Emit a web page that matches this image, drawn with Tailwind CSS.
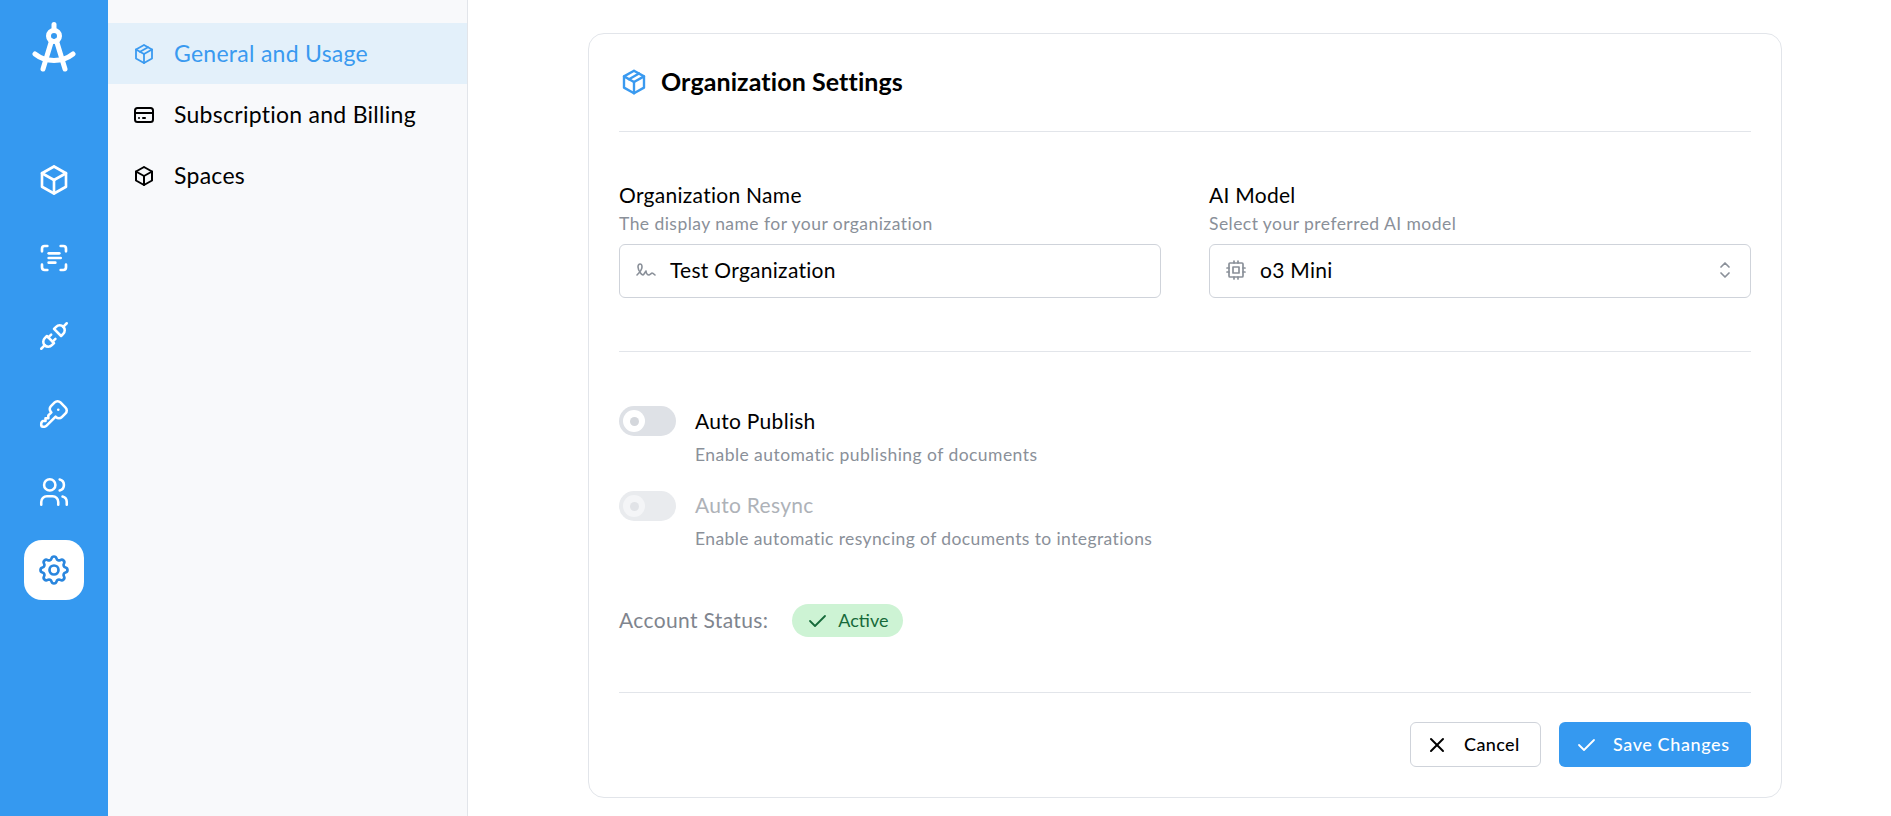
<!doctype html>
<html><head><meta charset="utf-8">
<script src="https://cdn.jsdelivr.net/npm/@tailwindcss/browser@4"></script>
</head>
<body class="m-0 bg-white font-['Lato','Noto_Sans',sans-serif] text-black">
<div class="flex h-[816px] w-[1891px] overflow-hidden">
  <aside class="flex w-[108px] shrink-0 flex-col items-center bg-[#3599f0] text-white">
    <svg class="mt-[21px] h-[52px] w-[44px]" viewBox="0 0 44 52" fill="none" stroke="currentColor" stroke-width="5" stroke-linecap="round" stroke-linejoin="round"><path d="M22 3.500v4"/><circle cx="22" cy="15" r="5.500"/><path d="M19.500 20 11 48"/><path d="M24.500 20 33 48"/><path d="M3 33c5 4 11 6.500 19 6.500S36 37 41 33"/></svg>
    <nav class="mt-[77px] flex flex-col gap-[18px]">
      <div class="flex size-[60px] items-center justify-center"><svg class="size-[36px]" viewBox="0 0 24 24" fill="none" stroke="currentColor" stroke-width="1.750" stroke-linecap="round" stroke-linejoin="round"><path d="M12 3l8 4.500l0 9l-8 4.500l-8 -4.500l0 -9l8 -4.500"/><path d="M12 12l8 -4.500"/><path d="M12 12l0 9"/><path d="M12 12l-8 -4.500"/></svg></div>
      <div class="flex size-[60px] items-center justify-center"><svg class="size-[32px]" viewBox="0 0 24 24" fill="none" stroke="currentColor" stroke-width="2" stroke-linecap="round" stroke-linejoin="round"><path d="M3 7V5a2 2 0 0 1 2-2h2"/><path d="M17 3h2a2 2 0 0 1 2 2v2"/><path d="M21 17v2a2 2 0 0 1-2 2h-2"/><path d="M7 21H5a2 2 0 0 1-2-2v-2"/><path d="M8 8.500h8"/><path d="M8 12h9"/><path d="M8 15.500h5"/></svg></div>
      <div class="flex size-[60px] items-center justify-center"><svg class="size-[34px]" viewBox="0 0 24 24" fill="none" stroke="currentColor" stroke-width="1.800" stroke-linecap="round" stroke-linejoin="round"><path d="M7 12l5 5l-1.500 1.500a3.536 3.536 0 1 1 -5 -5l1.500 -1.500z"/><path d="M17 12l-5 -5l1.500 -1.500a3.536 3.536 0 1 1 5 5l-1.500 1.500z"/><path d="M3 21l2.500 -2.500"/><path d="M18.500 5.500l2.500 -2.500"/><path d="M10 11l-2 2"/><path d="M13 14l-2 2"/></svg></div>
      <div class="flex size-[60px] items-center justify-center"><svg class="size-[34px]" viewBox="0 0 24 24" fill="none" stroke="currentColor" stroke-width="1.800" stroke-linecap="round" stroke-linejoin="round"><path d="M16.555 3.843l3.602 3.602a2.877 2.877 0 0 1 0 4.069l-2.643 2.643a2.877 2.877 0 0 1 -4.069 0l-.301 -.301l-6.558 6.558a2 2 0 0 1 -1.239 .578l-.175 .008h-1.172a1 1 0 0 1 -.993 -.883l-.007 -.117v-1.172a2 2 0 0 1 .467 -1.284l.119 -.13l.414 -.414h2v-2h2v-2l2.144 -2.144l-.301 -.301a2.877 2.877 0 0 1 0 -4.069l2.643 -2.643a2.877 2.877 0 0 1 4.069 0z"/><path d="M15 9h.01"/></svg></div>
      <div class="flex size-[60px] items-center justify-center"><svg class="size-[34px]" viewBox="0 0 24 24" fill="none" stroke="currentColor" stroke-width="1.800" stroke-linecap="round" stroke-linejoin="round"><path d="M9 7m-4 0a4 4 0 1 0 8 0a4 4 0 1 0 -8 0"/><path d="M3 21v-2a4 4 0 0 1 4 -4h4a4 4 0 0 1 4 4v2"/><path d="M16 3.130a4 4 0 0 1 0 7.750"/><path d="M21 21v-2a4 4 0 0 0 -3 -3.850"/></svg></div>
      <div class="flex size-[60px] items-center justify-center rounded-[18px] bg-white text-[#2a86de]"><svg class="size-[36px]" viewBox="0 0 24 24" fill="none" stroke="currentColor" stroke-width="1.800" stroke-linecap="round" stroke-linejoin="round"><path d="M10.325 4.317c.426 -1.756 2.924 -1.756 3.350 0a1.724 1.724 0 0 0 2.573 1.066c1.543 -.94 3.310 .826 2.370 2.370a1.724 1.724 0 0 0 1.065 2.572c1.756 .426 1.756 2.924 0 3.350a1.724 1.724 0 0 0 -1.066 2.573c.94 1.543 -.826 3.310 -2.370 2.370a1.724 1.724 0 0 0 -2.572 1.065c-.426 1.756 -2.924 1.756 -3.350 0a1.724 1.724 0 0 0 -2.573 -1.066c-1.543 .94 -3.310 -.826 -2.370 -2.370a1.724 1.724 0 0 0 -1.065 -2.572c-1.756 -.426 -1.756 -2.924 0 -3.350a1.724 1.724 0 0 0 1.066 -2.573c-.94 -1.543 .826 -3.310 2.370 -2.370c1 .608 2.296 .07 2.572 -1.065z"/><path d="M9 12a3 3 0 1 0 6 0a3 3 0 0 0 -6 0"/></svg></div>
    </nav>
  </aside>

  <div class="w-[360px] shrink-0 border-r border-[#e2e5ea] bg-[#f8f9fb] pt-[23px] text-[23px] tracking-[0.27px]">
    <div class="flex h-[61px] items-center gap-[18px] bg-[#e3f0fa] pl-[24px] text-[#3a9af0]">
      <svg class="size-[24px] shrink-0" viewBox="0 0 24 24" fill="none" stroke="currentColor" stroke-width="1.800" stroke-linecap="round" stroke-linejoin="round"><path d="M12 3l8 4.500v9l-8 4.500l-8-4.500v-9l8-4.500"/><path d="M12 12l8-4.500"/><path d="M12 12v9"/><path d="M12 12l-8-4.500"/><path d="M16 5.250l-8 4.500"/></svg>
      <span>General and Usage</span>
    </div>
    <div class="flex h-[61px] items-center gap-[18px] pl-[24px]">
      <svg class="size-[24px] shrink-0" viewBox="0 0 24 24" fill="none" stroke="currentColor" stroke-width="2" stroke-linecap="round" stroke-linejoin="round"><rect x="3" y="5" width="18" height="14" rx="2.500"/><path d="M3 10h18"/><path d="M7 15h.01"/><path d="M11 15h2"/></svg>
      <span>Subscription and Billing</span>
    </div>
    <div class="flex h-[61px] items-center gap-[18px] pl-[24px]">
      <svg class="size-[24px] shrink-0" viewBox="0 0 24 24" fill="none" stroke="currentColor" stroke-width="2" stroke-linecap="round" stroke-linejoin="round"><path d="M12 3l8 4.500l0 9l-8 4.500l-8 -4.500l0 -9l8 -4.500"/><path d="M12 12l8 -4.500"/><path d="M12 12l0 9"/><path d="M12 12l-8 -4.500"/></svg>
      <span>Spaces</span>
    </div>
  </div>

  <main class="min-w-0 flex-1 pl-[120px] pr-[109px] pt-[33px]">
    <section class="h-[765px] rounded-[16px] border border-[#e2e5ea] bg-white px-[30px]">
      <div class="flex h-[98px] items-center gap-[12px] border-b border-[#e2e5ea] pb-[2px]">
        <svg class="size-[30px] shrink-0 text-[#3a9af0]" viewBox="0 0 24 24" fill="none" stroke="currentColor" stroke-width="1.900" stroke-linecap="round" stroke-linejoin="round"><path d="M12 3l8 4.500v9l-8 4.500l-8-4.500v-9l8-4.500"/><path d="M12 12l8-4.500"/><path d="M12 12v9"/><path d="M12 12l-8-4.500"/><path d="M16 5.250l-8 4.500"/></svg>
        <h1 class="text-[25px] font-bold tracking-[0.1px]">Organization Settings</h1>
      </div>

      <div class="grid grid-cols-2 gap-x-[48px] border-b border-[#e2e5ea] pb-[53px] pt-[49px]">
        <div>
          <div class="h-[30px] text-[21px] leading-[28px] tracking-[0.28px]">Organization Name</div>
          <div class="mb-[7px] h-[26px] text-[17.500px] leading-[26px] tracking-[0.45px] text-[#8a9099]">The display name for your organization</div>
          <div class="flex h-[54px] items-center gap-[12px] rounded-[6px] border border-[#cfd3da] pb-[2px] pl-[14px] text-[21px] tracking-[0.28px]">
            <svg class="size-[24px] shrink-0 text-[#8a9099]" viewBox="0 0 24 24" fill="none" stroke="currentColor" stroke-width="1.600" stroke-linecap="round" stroke-linejoin="round"><path d="M3 17c3.333 -3.333 5 -6 5 -8c0 -3 -1 -3 -2 -3s-2.032 1.085 -2 3c.034 2.048 1.658 4.877 2.500 6c1.500 2 2.500 2.500 3.500 1l2 -3c.333 2.667 1.333 4 3 4c.53 0 2.639 -2 3 -2c.517 0 1.517 .667 3 2"/></svg>
            <span>Test Organization</span>
          </div>
        </div>
        <div>
          <div class="h-[30px] text-[21px] leading-[28px] tracking-[0.28px]">AI Model</div>
          <div class="mb-[7px] h-[26px] text-[17.500px] leading-[26px] tracking-[0.45px] text-[#8a9099]">Select your preferred AI model</div>
          <div class="flex h-[54px] items-center gap-[12px] rounded-[6px] border border-[#cfd3da] pb-[2px] pl-[14px] pr-[13px] text-[21px] tracking-[0.28px]">
            <svg class="size-[24px] shrink-0 text-[#8a9099]" viewBox="0 0 24 24" fill="none" stroke="currentColor" stroke-width="1.700" stroke-linecap="round" stroke-linejoin="round"><path d="M5 5m0 1a1 1 0 0 1 1 -1h12a1 1 0 0 1 1 1v12a1 1 0 0 1 -1 1h-12a1 1 0 0 1 -1 -1z"/><path d="M9 9h6v6h-6z"/><path d="M3 10h2"/><path d="M3 14h2"/><path d="M10 3v2"/><path d="M14 3v2"/><path d="M21 10h-2"/><path d="M21 14h-2"/><path d="M14 21v-2"/><path d="M10 21v-2"/></svg>
            <span class="flex-1">o3 Mini</span>
            <svg class="size-[24px] shrink-0 text-[#8a9099]" viewBox="0 0 24 24" fill="none" stroke="currentColor" stroke-width="1.700" stroke-linecap="round" stroke-linejoin="round"><path d="M8 9l4 -4l4 4"/><path d="M16 15l-4 4l-4 -4"/></svg>
          </div>
        </div>
      </div>

      <div class="pt-[54px]">
        <div class="flex gap-[19px]">
          <div class="flex h-[30px] w-[57px] shrink-0 items-center rounded-full bg-[#dee1e6] pl-[4px]"><span class="flex size-[22px] items-center justify-center rounded-full bg-white"><span class="size-[9px] rounded-full bg-[#d4d7dc]"></span></span></div>
          <div>
            <div class="h-[29px] pt-[1px] text-[21px] leading-[28px] tracking-[0.28px]">Auto Publish</div>
            <div class="mt-[5px] h-[30px] text-[17.500px] leading-[30px] tracking-[0.45px] text-[#8a9099]">Enable automatic publishing of documents</div>
          </div>
        </div>
        <div class="mt-[21px] flex gap-[19px]">
          <div class="flex h-[30px] w-[57px] shrink-0 items-center rounded-full bg-[#e9ebee] pl-[4px]"><span class="flex size-[22px] items-center justify-center rounded-full bg-[#f4f5f7]"><span class="size-[9px] rounded-full bg-[#e1e3e7]"></span></span></div>
          <div>
            <div class="h-[28px] text-[21px] leading-[28px] tracking-[0.28px] text-[#aeb2b8]">Auto Resync</div>
            <div class="mt-[5px] h-[30px] text-[17.500px] leading-[30px] tracking-[0.4px] text-[#8a9099]">Enable automatic resyncing of documents to integrations</div>
          </div>
        </div>
        <div class="mt-[50px] flex h-[33px] items-center gap-[24px]">
          <span class="pb-[2px] text-[21px] tracking-[0.35px] text-[#7f858e]">Account Status:</span>
          <span class="flex h-[33px] w-[111px] items-center gap-[9px] rounded-full bg-[#cdf3d4] pl-[13px] text-[18px] text-[#166a3a]">
            <svg class="size-[24px] shrink-0" viewBox="0 0 24 24" fill="none" stroke="currentColor" stroke-width="1.800" stroke-linecap="round" stroke-linejoin="round"><path d="M5 12l5 5l10 -10"/></svg>
            Active
          </span>
        </div>
      </div>

      <div class="mt-[55px] flex justify-end gap-[18px] border-t border-[#e2e5ea] pt-[29px]">
        <button class="flex h-[45px] w-[131px] items-center gap-[15px] rounded-[6px] border border-[#cfd3da] bg-white pl-[14px] text-[18px] font-medium tracking-[0.4px]"><svg class="size-[24px] shrink-0" viewBox="0 0 24 24" fill="none" stroke="currentColor" stroke-width="2" stroke-linecap="round" stroke-linejoin="round"><path d="M18 6l-12 12"/><path d="M6 6l12 12"/></svg>Cancel</button>
        <button class="flex h-[45px] w-[192px] items-center gap-[15px] rounded-[6px] bg-[#3599f0] pl-[15px] text-[18px] font-medium tracking-[0.6px] text-white"><svg class="size-[24px] shrink-0" viewBox="0 0 24 24" fill="none" stroke="currentColor" stroke-width="1.800" stroke-linecap="round" stroke-linejoin="round"><path d="M5 12l5 5l10 -10"/></svg>Save Changes</button>
      </div>
    </section>
  </main>
</div>
</body></html>
